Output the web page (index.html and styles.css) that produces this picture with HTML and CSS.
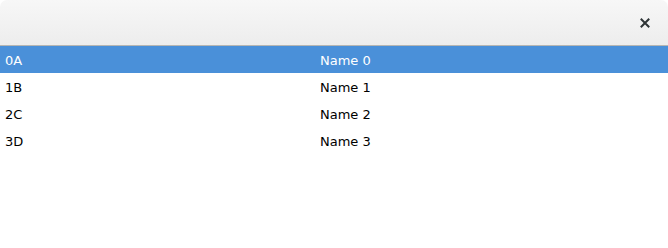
FILE: index.html
```html
<!DOCTYPE html>
<html>
<head>
<meta charset="utf-8">
<link rel="stylesheet" href="styles.css">
</head>
<body>
<div class="window">
  <div class="headerbar">
    <button class="close" aria-label="Close">
      <svg width="10" height="10" viewBox="0 0 10 10"><path d="M1.5 1.5 L8.5 8.5 M8.5 1.5 L1.5 8.5" stroke="#2e3436" stroke-width="2" stroke-linecap="square"/></svg>
    </button>
  </div>
  <div class="list">
    <div class="row selected"><span class="c1">0A</span><span class="c2">Name 0</span></div>
    <div class="row"><span class="c1">1B</span><span class="c2">Name 1</span></div>
    <div class="row"><span class="c1">2C</span><span class="c2">Name 2</span></div>
    <div class="row"><span class="c1">3D</span><span class="c2">Name 3</span></div>
  </div>
</div>
</body>
</html>
```
FILE: styles.css
```css
html, body { margin: 0; padding: 0; background: #ffffff; }
body { font-family: "DejaVu Sans", sans-serif; font-size: 13px; color: #2e3436; }
.window { width: 668px; height: 248px; display: flex; flex-direction: column; background: #fff; }
.headerbar {
  height: 45px;
  border-bottom: 1px solid #b6b6b3;
  background: linear-gradient(to bottom, #f7f7f7, #ededed);
  border-radius: 7px 7px 0 0;
  display: flex; align-items: center; justify-content: flex-end;
  padding-right: 15px;
  padding-top: 1px;
  box-sizing: border-box;
  height: 46px;
}
.close { border: none; background: transparent; padding: 0; width: 16px; height: 16px; display: flex; align-items: center; justify-content: center; }
.list { display: flex; flex-direction: column; }
.row { height: 27px; padding-top: 2px; box-sizing: border-box; display: flex; align-items: center; color: #000; }
.row.selected { background: #4a90d9; color: #ffffff; }
.c1 { width: 315px; padding-left: 5px; box-sizing: border-box; }
.c2 { flex: 1; padding-left: 5px; }
```
